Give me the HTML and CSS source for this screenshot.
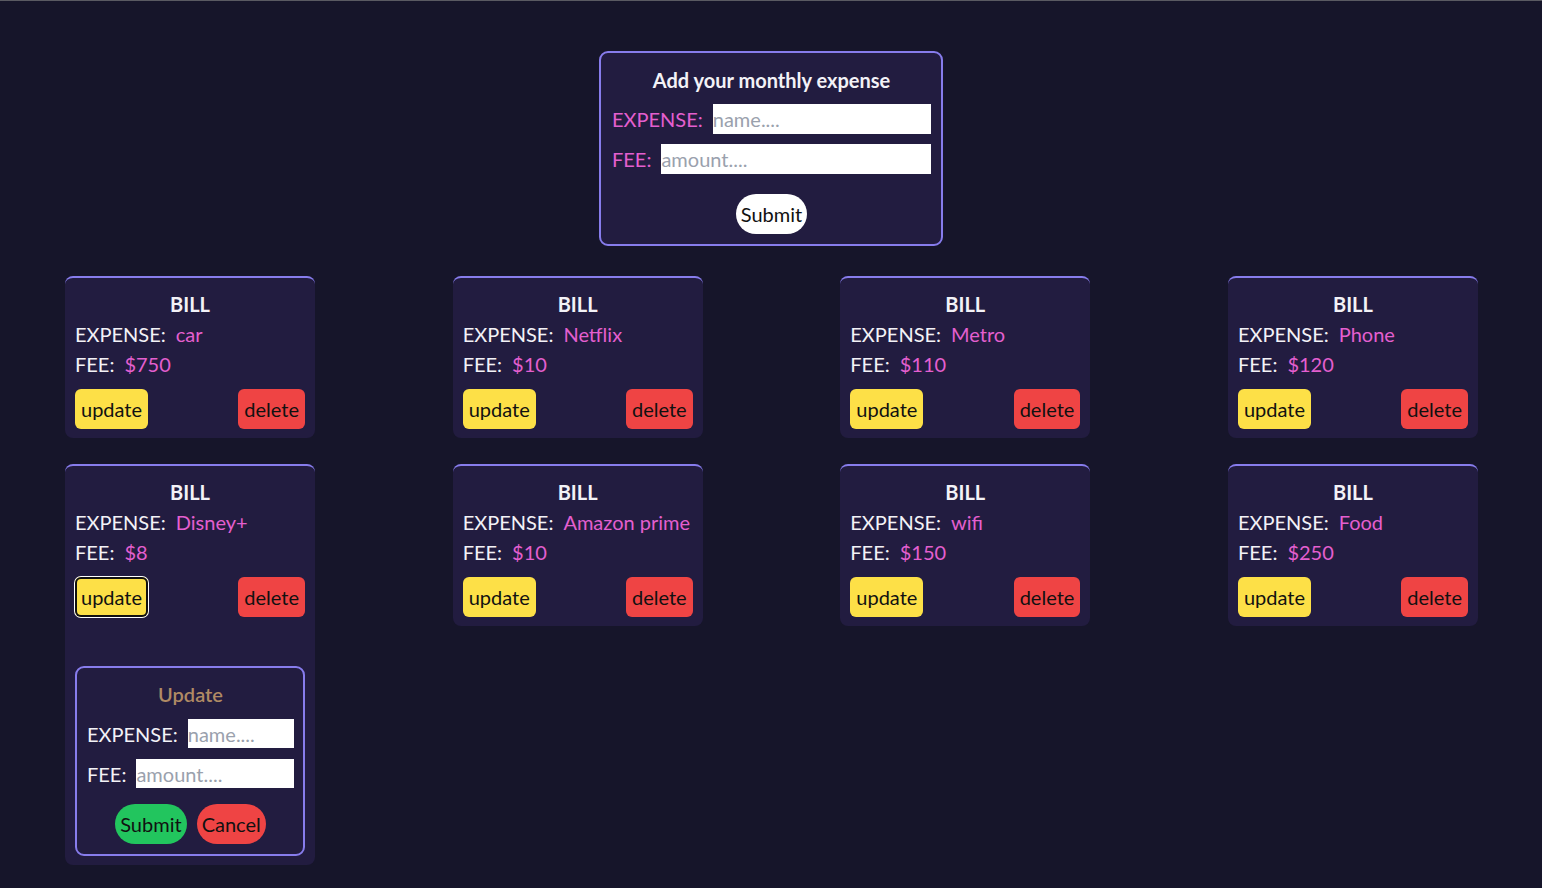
FILE: index.html
```html
<!DOCTYPE html>
<html lang="en">
<head>
<meta charset="utf-8">
<title>Monthly expenses</title>
<link rel="stylesheet" href="styles.css">
</head>
<body>
<div class="topline"></div>
<main class="page">
  <form class="add-form">
    <h2 class="add-title">Add your monthly expense</h2>
    <label class="field pink"><span>EXPENSE:</span><input type="text" placeholder="name...."></label>
    <label class="field pink"><span>FEE:</span><input type="text" placeholder="amount...."></label>
    <div class="submit-row"><button type="button" class="btn-white">Submit</button></div>
  </form>

  <section class="grid">
    <div class="card">
      <h3 class="bill">BILL</h3>
      <p class="line">EXPENSE:<span class="val">car</span></p>
      <p class="line">FEE:<span class="val">$750</span></p>
      <div class="actions"><button class="btn upd">update</button><button class="btn del">delete</button></div>
    </div>
    <div class="card">
      <h3 class="bill">BILL</h3>
      <p class="line">EXPENSE:<span class="val">Netflix</span></p>
      <p class="line">FEE:<span class="val">$10</span></p>
      <div class="actions"><button class="btn upd">update</button><button class="btn del">delete</button></div>
    </div>
    <div class="card">
      <h3 class="bill">BILL</h3>
      <p class="line">EXPENSE:<span class="val">Metro</span></p>
      <p class="line">FEE:<span class="val">$110</span></p>
      <div class="actions"><button class="btn upd">update</button><button class="btn del">delete</button></div>
    </div>
    <div class="card">
      <h3 class="bill">BILL</h3>
      <p class="line">EXPENSE:<span class="val">Phone</span></p>
      <p class="line">FEE:<span class="val">$120</span></p>
      <div class="actions"><button class="btn upd">update</button><button class="btn del">delete</button></div>
    </div>
    <div class="card">
      <h3 class="bill">BILL</h3>
      <p class="line">EXPENSE:<span class="val">Disney+</span></p>
      <p class="line">FEE:<span class="val">$8</span></p>
      <div class="actions"><button class="btn upd focused">update</button><button class="btn del">delete</button></div>
      <form class="upd-form">
        <h4 class="upd-title">Update</h4>
        <label class="field"><span>EXPENSE:</span><input type="text" placeholder="name...."></label>
        <label class="field"><span>FEE:</span><input type="text" placeholder="amount...."></label>
        <div class="upd-actions"><button type="button" class="pill green">Submit</button><button type="button" class="pill red">Cancel</button></div>
      </form>
    </div>
    <div class="card">
      <h3 class="bill">BILL</h3>
      <p class="line">EXPENSE:<span class="val">Amazon prime</span></p>
      <p class="line">FEE:<span class="val">$10</span></p>
      <div class="actions"><button class="btn upd">update</button><button class="btn del">delete</button></div>
    </div>
    <div class="card">
      <h3 class="bill">BILL</h3>
      <p class="line">EXPENSE:<span class="val">wifi</span></p>
      <p class="line">FEE:<span class="val">$150</span></p>
      <div class="actions"><button class="btn upd">update</button><button class="btn del">delete</button></div>
    </div>
    <div class="card">
      <h3 class="bill">BILL</h3>
      <p class="line">EXPENSE:<span class="val">Food</span></p>
      <p class="line">FEE:<span class="val">$250</span></p>
      <div class="actions"><button class="btn upd">update</button><button class="btn del">delete</button></div>
    </div>
  </section>
</main>
</body>
</html>
```

FILE: styles.css
```css
* { box-sizing: border-box; }
html, body { margin: 0; padding: 0; }
body {
  background: #16152a;
  color: #f3f2f7;
  font-family: Lato, "Open Sans", sans-serif;
  font-size: 20px;
  min-height: 888px;
}
.topline { height: 1px; background: #5a5a62; }
.page { display: flex; flex-direction: column; align-items: center; padding-top: 50px; }

.add-form {
  width: 344px;
  background: #221c40;
  border: 2px solid #877cec;
  border-radius: 9px;
  padding: 13px 10px 10px 11px;
  display: flex;
  flex-direction: column;
}
.add-title { margin: 0 0 10px; text-align: center; font-size: 20px; line-height: 28px; font-weight: 700; color: #f3f2f7; }
.field { display: flex; align-items: center; gap: 10px; height: 30px; margin-bottom: 10px; font-size: 20px; }
.field span { white-space: nowrap; }
.field input {
  flex: 1; min-width: 0; height: 30px; border: 0; padding: 0; margin: 0;
  background: #fff; font: inherit; color: #111; outline: none;
}
.field input::placeholder { color: #9aa1ad; }
.pink { color: #e45fcf; }
.submit-row { display: flex; justify-content: center; margin-top: 10px; }
.btn-white {
  height: 40px; padding: 0 5px; border: 0; border-radius: 20px;
  background: #fff; color: #111; font: inherit; font-size: 20px;
}

.grid {
  align-self: stretch;
  display: grid;
  grid-template-columns: repeat(4, 250px);
  justify-content: space-between;
  align-items: start;
  row-gap: 26px;
  padding: 0 64px 0 65px;
  margin-top: 30px;
}
.card {
  width: 250px;
  background: #221c40;
  border-top: 2px solid #877cec;
  border-radius: 8px;
  padding: 11px 10px 9px;
}
.bill { margin: 0; text-align: center; font-size: 20px; font-weight: 700; line-height: 30px; }
.line { margin: 0; line-height: 30px; font-size: 20px; }
.val { color: #e45fcf; margin-left: 10px; }
.actions { display: flex; justify-content: space-between; margin-top: 10px; }
.btn {
  height: 40px; padding: 0 6px; border: 0; border-radius: 6px;
  font: inherit; font-size: 20px; color: #111;
}
.upd { background: #fde047; }
.del { background: #ef4444; }
.btn.focused { box-shadow: inset 0 0 0 2px #111, 0 0 0 1px #fff; }

.upd-form {
  margin-top: 49px;
  border: 2px solid #877cec;
  border-radius: 9px;
  padding: 12px 9px 10px 10px;
}
.upd-title { margin: 0 0 11px; text-align: center; font-size: 20px; line-height: 28px; font-weight: 600; color: #b08a64; }
.upd-form .field { height: 29px; margin-bottom: 11px; }
.upd-form .field input { height: 29px; }
.upd-actions { display: flex; justify-content: center; gap: 10px; margin-top: 16px; }
.pill { height: 40px; padding: 0 5px; border: 0; border-radius: 20px; font: inherit; font-size: 20px; color: #111; }
.green { background: #22c55e; }
.red { background: #ef4444; }
```
